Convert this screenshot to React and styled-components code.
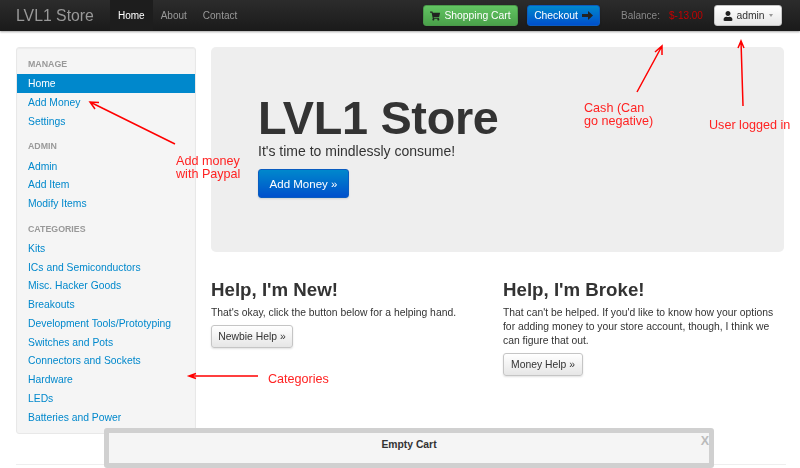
import React from "react";
import styled, { createGlobalStyle } from "styled-components";
import { FaShoppingCart, FaUser } from "react-icons/fa";

const GlobalStyle = createGlobalStyle`
    html, body { margin: 0; padding: 0; background: #fff; }
    body {
        font-family: "Liberation Sans", Arial, sans-serif;
        font-size: 10.35px;
        line-height: 14px;
        color: #333;
    }
`;

const Page = styled.div`
    position: relative;
    width: 800px;
    height: 468px;
    overflow: hidden;
`;

// the reference is a scaled down screenshot, so the page itself is a little soft
const Shot = styled.div`
    position: relative;
    height: 468px;
    filter: blur(.35px);
`;

const Navbar = styled.header`
    display: flex;
    align-items: center;
    height: 31px;
    padding: 0 18px 0 16px;
    box-sizing: border-box;
    background: linear-gradient(#2c2c2c, #1a1a1a);
    box-shadow: 0 1px 2px rgba(0, 0, 0, .35);
`;

const Brand = styled.div`
    width: 94px;
    font-size: 15.8px;
    color: #999;
`;

const NavItem = styled.a`
    display: block;
    padding: 0 8px;
    font-size: 10px;
    line-height: 31px;
    color: ${props => props.$active ? "#fff" : "#999"};
    background: ${props => props.$active ? "#1d1d1d" : "none"};
`;

const NavRight = styled.div`
    display: flex;
    align-items: center;
    margin-left: auto;
`;

const Button = styled.button`
    display: inline-flex;
    align-items: center;
    justify-content: center;
    gap: ${props => props.$gap || 0}px;
    box-sizing: border-box;
    width: ${props => props.$w}px;
    height: ${props => props.$h || 21}px;
    margin-left: ${props => props.$ml || 0}px;
    padding: 0;
    font-family: inherit;
    font-size: ${props => props.$size || 10.35}px;
    border-radius: 3px;
    border: 1px solid ${props => props.$border || "#c5c5c5"};
    color: ${props => props.$color || "#333"};
    background: ${props => props.$bg || "linear-gradient(#fff, #e6e6e6)"};
    box-shadow: 0 1px 2px rgba(0, 0, 0, .12);
`;

const GREEN = "linear-gradient(#62c462, #4aa14a)";
const BLUE = "linear-gradient(#0088cc, #0050cc)";

const BalanceLabel = styled.span`
    width: 48px;
    margin-left: 21px;
    font-size: 10px;
    color: #888;
`;

const BalanceValue = styled.span`
    width: 45px;
    font-size: 10px;
    color: #c40000;
`;

const Caret = styled.span`
    width: 0;
    height: 0;
    margin-left: 1px;
    border-left: 2.5px solid transparent;
    border-right: 2.5px solid transparent;
    border-top: 3px solid #999;
`;

const Content = styled.div`
    display: flex;
    gap: 15px;
    padding: 16px 16px 0;
`;

const Sidebar = styled.nav`
    flex: none;
    box-sizing: border-box;
    width: 180px;
    height: 387px;
    padding: 6px 0 7px;
    background: #f5f5f5;
    border: 1px solid #e8e8e8;
    border-radius: 3px;
    box-shadow: inset 0 1px 1px rgba(0, 0, 0, .04);
`;

const NavHeader = styled.div`
    height: 20.2px;
    margin-top: ${props => props.$first ? 0 : 5.9}px;
    padding-left: 11px;
    font-size: 8.8px;
    font-weight: bold;
    line-height: 21.5px;
    text-transform: uppercase;
    color: #999;
`;

const SideLink = styled.a`
    display: block;
    height: 18.75px;
    padding-left: 11px;
    line-height: 20px;
    color: ${props => props.$active ? "#fff" : "#0088cc"};
    background: ${props => props.$active ? "#0088cc" : "none"};
`;

const Main = styled.main`
    flex: 1;
    min-width: 0;
`;

const Hero = styled.section`
    box-sizing: border-box;
    height: 205px;
    padding: 48px 47px 0;
    background: #eee;
    border-radius: 5px;
`;

const HeroTitle = styled.h1`
    margin: 0 0 -1px;
    font-size: 46.8px;
    line-height: 47px;
    letter-spacing: -.3px;
    font-weight: bold;
    color: #333;
`;

const HeroText = styled.p`
    margin: 0 0 7px;
    font-size: 14px;
    line-height: 21px;
    color: #333;
`;

const Columns = styled.div`
    display: grid;
    grid-template-columns: 272px 272px;
    gap: 20px;
    margin-top: 24px;
`;

const Heading = styled.h2`
    margin: 0;
    font-size: 18.7px;
    line-height: 28px;
    font-weight: bold;
`;

const Text = styled.p`
    margin: 2px 0 5px;
`;

const Divider = styled.hr`
    position: absolute;
    left: 16px;
    right: 14px;
    top: 464px;
    margin: 0;
    border: 0;
    border-top: 1px solid #eee;
`;

const CartBar = styled.div`
    position: absolute;
    left: 104px;
    top: 428px;
    display: flex;
    align-items: center;
    justify-content: center;
    box-sizing: border-box;
    width: 610px;
    height: 40px;
    padding-bottom: 6px;
    background: #f5f5f5;
    border: 5px solid #d0d0d0;
    border-radius: 3px;
    font-weight: bold;
    color: #333;
`;

const CartClose = styled.span`
    position: absolute;
    right: 0;
    top: 1px;
    font-size: 12.5px;
    line-height: 14px;
    color: #bbb;
`;

const Note = styled.div`
    position: absolute;
    left: ${props => props.$x}px;
    top: ${props => props.$y}px;
    font-size: 12.6px;
    line-height: 13px;
    white-space: pre;
    color: #ff2222;
`;

const ArrowLayer = styled.svg`
    position: absolute;
    left: 0;
    top: 0;
    pointer-events: none;
`;

const manage = ["Add Money", "Settings"];
const admin = ["Admin", "Add Item", "Modify Items"];
const categories = [
    "Kits",
    "ICs and Semiconductors",
    "Misc. Hacker Goods",
    "Breakouts",
    "Development Tools/Prototyping",
    "Switches and Pots",
    "Connectors and Sockets",
    "Hardware",
    "LEDs",
    "Batteries and Power",
];

const CheckoutArrow = () => (
    <svg width="11" height="9" viewBox="0 0 11 9" fill="#222">
        <path d="M0 3h6V0l5 4.500L6 9V6H0z" />
    </svg>
);

export default function App() {
    return (
        <Page>
            <GlobalStyle />
            <Shot>
                <Navbar>
                    <Brand>LVL1 Store</Brand>
                    <NavItem $active>Home</NavItem>
                    <NavItem>About</NavItem>
                    <NavItem>Contact</NavItem>
                    <NavRight>
                        <Button $w={95} $gap={4} $bg={GREEN} $border="#4a9a4a" $color="#fff">
                            <FaShoppingCart size={10} color="#222" />
                            Shopping Cart
                        </Button>
                        <Button $w={73} $gap={4} $ml={9} $bg={BLUE} $border="#0a5cc0" $color="#fff">
                            Checkout
                            <CheckoutArrow />
                        </Button>
                        <BalanceLabel>Balance:</BalanceLabel>
                        <BalanceValue>$-13.00</BalanceValue>
                        <Button $w={68} $gap={3}>
                            <FaUser size={10} color="#222" />
                            admin
                            <Caret />
                        </Button>
                    </NavRight>
                </Navbar>

                <Content>
                    <Sidebar>
                        <NavHeader $first>Manage</NavHeader>
                        <SideLink $active>Home</SideLink>
                        {manage.map(name => <SideLink key={name}>{name}</SideLink>)}
                        <NavHeader>Admin</NavHeader>
                        {admin.map(name => <SideLink key={name}>{name}</SideLink>)}
                        <NavHeader>Categories</NavHeader>
                        {categories.map(name => <SideLink key={name}>{name}</SideLink>)}
                    </Sidebar>

                    <Main>
                        <Hero>
                            <HeroTitle>LVL1 Store</HeroTitle>
                            <HeroText>It's time to mindlessly consume!</HeroText>
                            <Button $w={91} $h={29} $size={11.5} $bg={BLUE} $border="#0a5cc0" $color="#fff">Add Money »</Button>
                        </Hero>
                        <Columns>
                            <div>
                                <Heading>Help, I'm New!</Heading>
                                <Text>That's okay, click the button below for a helping hand.</Text>
                                <Button $w={82} $h={23}>Newbie Help »</Button>
                            </div>
                            <div>
                                <Heading>Help, I'm Broke!</Heading>
                                <Text>That can't be helped. If you'd like to know how your options for adding money to your store account, though, I think we can figure that out.</Text>
                                <Button $w={80} $h={23}>Money Help »</Button>
                            </div>
                        </Columns>
                    </Main>
                </Content>

                <Divider />
                <CartBar>
                    Empty Cart
                    <CartClose>X</CartClose>
                </CartBar>
            </Shot>

            <ArrowLayer width="800" height="468" fill="none" stroke="#ff0000" strokeWidth="1.5">
                <path d="M175 144L90 102M99 102.500L90 102L95 109" />
                <path d="M637 92L662 46M655 52L662 46L662 55" />
                <path d="M743 106L741 41M738 48L741 41L744 48" />
                <path d="M258 376H189M196 373.500L189 376L196 378.500" />
            </ArrowLayer>
            <Note $x={176} $y={155}>{"Add money\nwith Paypal"}</Note>
            <Note $x={584} $y={102}>{"Cash (Can\ngo negative)"}</Note>
            <Note $x={709} $y={119}>User logged in</Note>
            <Note $x={268} $y={373}>Categories</Note>
        </Page>
    );
}
